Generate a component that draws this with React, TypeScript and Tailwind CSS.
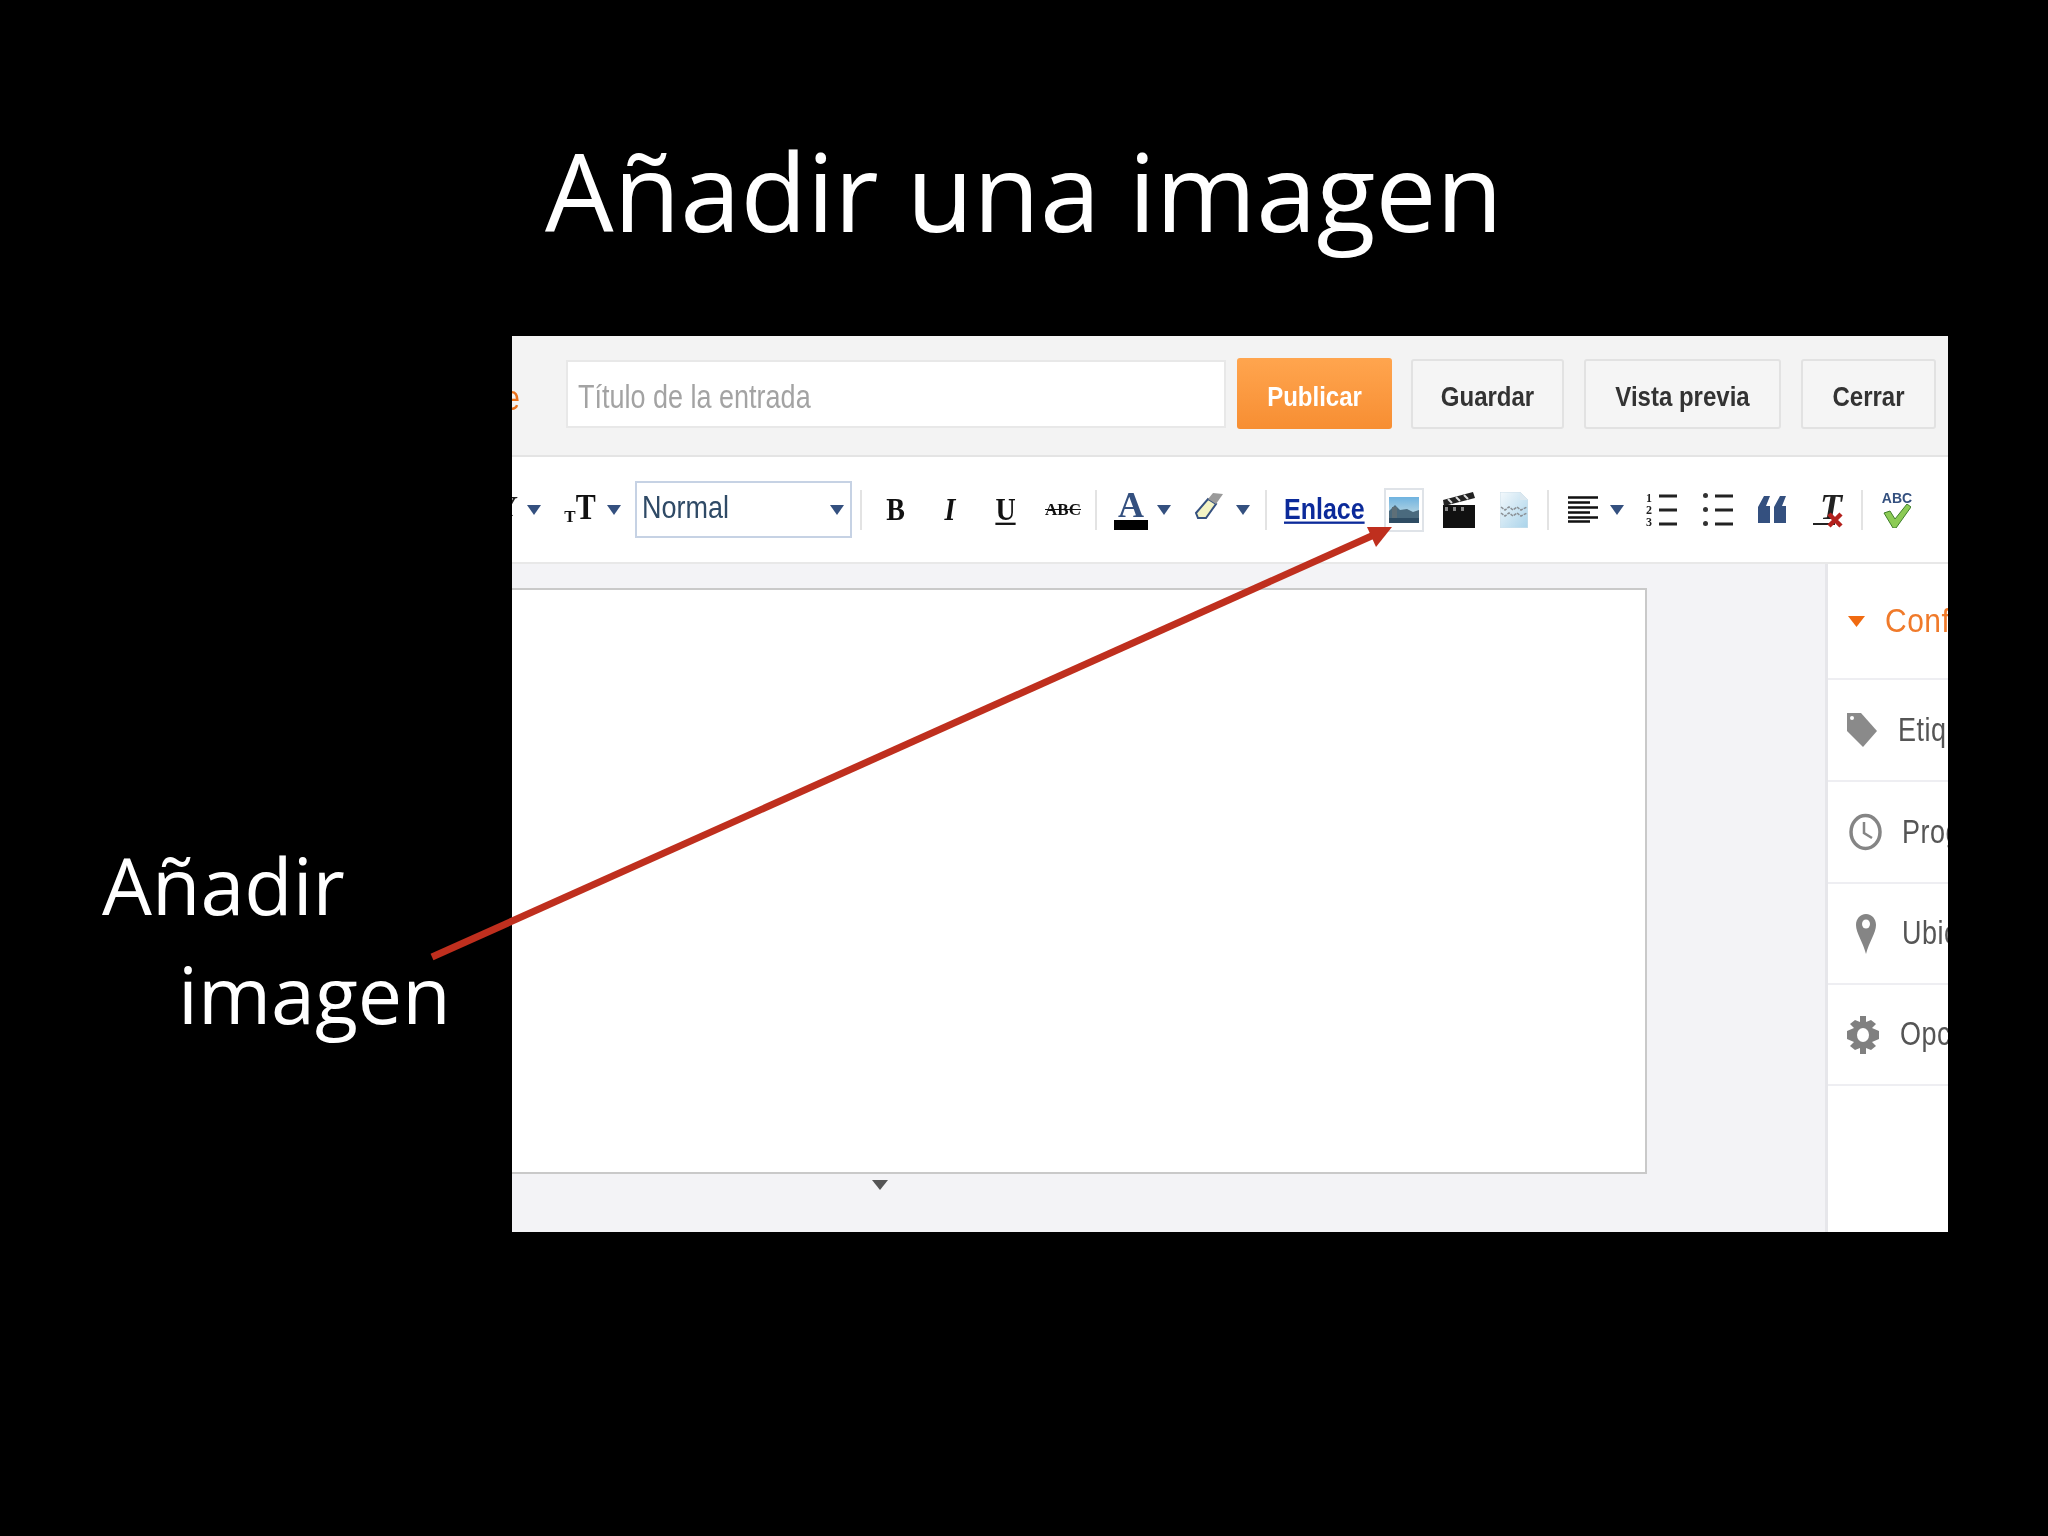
const sansFont = "font-['Liberation_Sans',Arial,sans-serif]";
const serifFont = "font-['Liberation_Serif','Times_New_Roman',serif]";

function Caret({ className = "" }: { className?: string }) {
  return (
    <svg width="16" height="12" viewBox="0 0 16 12" className={className}>
      <polygon points="1,1 15,1 8,11" fill="#34507f" />
    </svg>
  );
}

function Sep({ ml }: { ml: string }) {
  return <div className={`${ml} w-[2px] h-[40px] bg-[#e3e3e3]`} />;
}

function PictureIcon() {
  return (
    <svg width="30" height="26" viewBox="0 0 30 26">
      <defs>
        <linearGradient id="sky" x1="0" y1="0" x2="0" y2="1">
          <stop offset="0" stopColor="#6fb3e0" />
          <stop offset="0.55" stopColor="#a9cfe2" />
          <stop offset="1" stopColor="#3d5f78" />
        </linearGradient>
      </defs>
      <rect width="30" height="26" fill="url(#sky)" />
      <path d="M0 14 L6 8 L11 13 L18 12 L24 15 L30 13 V26 H0 Z" fill="#4a6a7e" />
      <rect x="3" y="10" width="5" height="12" fill="#5e6f78" />
      <rect x="0" y="21" width="30" height="5" fill="#2e4c63" />
    </svg>
  );
}

function ClapperIcon() {
  return (
    <svg width="32" height="36" viewBox="0 0 32 36">
      <rect x="0" y="13" width="32" height="23" fill="#111" />
      <path d="M0 8 L30 0 L32 6 L1 14 Z" fill="#222" />
      <path d="M5 7 L9 11 M13 5 L17 9 M21 3 L25 7" stroke="#ddd" strokeWidth="2" />
      <rect x="2" y="15" width="3" height="4" fill="#888" />
      <rect x="10" y="15" width="3" height="4" fill="#888" />
      <rect x="18" y="15" width="3" height="4" fill="#888" />
    </svg>
  );
}

function JumpIcon() {
  return (
    <svg width="28" height="36" viewBox="0 0 28 36">
      <defs>
        <linearGradient id="page" x1="0" y1="0" x2="1" y2="1">
          <stop offset="0" stopColor="#f4f9fc" />
          <stop offset="1" stopColor="#a9d3ea" />
        </linearGradient>
      </defs>
      <path d="M0 0 H20 L28 8 V36 H0 Z" fill="url(#page)" stroke="#cfe0ea" />
      <path d="M20 0 V8 H28" fill="#dbe8f0" />
      <path d="M1 15 L5 18 L9 15 L13 18 L17 15 L21 18 L27 15 M1 21 L5 24 L9 21 L13 24 L17 21 L21 24 L27 21" stroke="#8a8f94" strokeWidth="1.5" fill="none" strokeDasharray="3 1" />
    </svg>
  );
}

function EraserIcon() {
  return (
    <svg width="29" height="26" viewBox="0 0 29 26">
      <path d="M2 20 L14 6 L22 11 L12 25 H4 Z" fill="#f3f3c4" stroke="#34507f" strokeWidth="2" />
      <path d="M14 6 L19 0 L29 1 L22 11 Z" fill="#9a9a9a" />
    </svg>
  );
}

function AlignIcon() {
  return (
    <svg width="30" height="27" viewBox="0 0 30 27">
      <path d="M0 1.5 H30 M0 6.5 H22 M0 11.5 H30 M0 16.5 H22 M0 21.5 H30 M0 25.5 H22" stroke="#111" strokeWidth="2.6" />
    </svg>
  );
}

function ListLines() {
  return (
    <svg width="18" height="36" viewBox="0 0 18 36">
      <path d="M0 4 H18 M0 18 H18 M0 32 H18" stroke="#222" strokeWidth="3" />
    </svg>
  );
}

function QuoteIcon() {
  return (
    <svg width="28" height="27" viewBox="0 0 28 27">
      <path d="M6 0 H12 L8 10 H12 V27 H0 V11 Z M22 0 H28 L24 10 H28 V27 H16 V11 Z" fill="#34507f" />
    </svg>
  );
}

function SpellCheck() {
  return (
    <svg width="28" height="24" viewBox="0 0 28 24">
      <path d="M1 9 L7 7 L12 15 L24 0 L28 3 L13 24 H10 Z" fill="#8ccb55" stroke="#3f7f2a" strokeWidth="1" />
    </svg>
  );
}

function TagIcon() {
  return (
    <svg width="30" height="34" viewBox="0 0 30 34">
      <path d="M0 0 H14 L30 18 L16 34 L0 18 Z" fill="#8a8a8a" />
      <circle cx="5" cy="5" r="2" fill="#fff" />
    </svg>
  );
}

function ClockIcon() {
  return (
    <svg width="33" height="38" viewBox="0 0 33 38">
      <ellipse cx="16.5" cy="19" rx="14.5" ry="16.5" fill="none" stroke="#858585" strokeWidth="3.5" />
      <path d="M15 9 V20 L23 25" fill="none" stroke="#858585" strokeWidth="2.5" />
    </svg>
  );
}

function PinIcon() {
  return (
    <svg width="20" height="40" viewBox="0 0 20 40">
      <path d="M10 0 C4 0 0 5 0 11 C0 19 7 28 10 40 C13 28 20 19 20 11 C20 5 16 0 10 0 Z" fill="#858585" />
      <ellipse cx="10" cy="10" rx="4" ry="4.5" fill="#fff" />
    </svg>
  );
}

function GearIcon() {
  return (
    <svg width="32" height="38" viewBox="0 0 32 38">
      <path d="M13 0 H19 V6 L24 4 L29 8 L25 12 L32 15 V23 L25 26 L29 30 L24 34 L19 32 V38 H13 V32 L8 34 L3 30 L7 26 L0 23 V15 L7 12 L3 8 L8 4 L13 6 Z" fill="#808080" />
      <ellipse cx="16" cy="19" rx="6" ry="7" fill="#fff" />
    </svg>
  );
}

function SideRow({ pl, gap, height, icon, label, tone }: { pl: string; gap: string; height: string; icon: React.ReactNode; label: string; tone: string }) {
  return (
    <div className={`${height} ${pl} flex items-center overflow-hidden border-b-2 border-[#eeeef2] shrink-0`}>
      <div className="shrink-0 flex">{icon}</div>
      <span className={`${gap} ${tone} leading-none whitespace-nowrap tracking-[0.5px]`}>{label}</span>
    </div>
  );
}

function ActionButton({ label, className }: { label: string; className: string }) {
  return (
    <button className={`${className} h-[70px] flex items-center justify-center rounded-[3px] border-2 border-[#e2e2e2] bg-[#f5f5f5] text-[#333] text-[24px] font-bold`}>
      <span className="translate-y-[3px] scale-y-[1.15]">{label}</span>
    </button>
  );
}

export default function App() {
  return (
    <div className="relative w-[2048px] h-[1536px] overflow-hidden bg-black text-white font-['Open_Sans',sans-serif]">
      {/* Title */}
      <div className="h-[336px] pt-[136px] flex justify-center">
        <h1 className="text-[108.5px] leading-[108px] font-normal">Añadir una imagen</h1>
      </div>

      <div className="flex">
        {/* Caption */}
        <div className="w-[512px] pt-[494px] text-[79px] leading-[109px]">
          <div className="pl-[102px]">Añadir</div>
          <div className="pl-[178px]">imagen</div>
        </div>

        {/* Editor screenshot */}
        <div className={`w-[1436px] h-[896px] flex flex-col bg-white ${sansFont}`}>
          <div className="h-[121px] shrink-0 pb-[4px] flex items-center bg-[#f3f3f3] border-b-2 border-[#e4e4e4] blur-[0.4px]">
            <div className="w-[8px] overflow-hidden flex justify-end text-[#e8711c] text-[30px] leading-none translate-y-[4px] scale-y-[1.15]">e</div>
            <div className="ml-[46px] w-[660px] h-[68px] flex items-center pl-[10px] bg-white border-2 border-[#e8e8e8] text-[#a3a3a3] text-[27px]">
              <span className="translate-y-[4px] scale-y-[1.2]">Título de la entrada</span>
            </div>
            <button className="ml-[11px] w-[155px] h-[71px] flex items-center justify-center rounded-[3px] bg-gradient-to-b from-[#ffa54e] to-[#f78e32] text-white text-[24px] font-bold">
              <span className="translate-y-[3px] scale-y-[1.15]">Publicar</span>
            </button>
            <ActionButton label="Guardar" className="ml-[19px] w-[153px]" />
            <ActionButton label="Vista previa" className="ml-[20px] w-[197px]" />
            <ActionButton label="Cerrar" className="ml-[20px] w-[135px]" />
          </div>

          <div className="h-[107px] shrink-0 flex items-center bg-white border-b-2 border-[#e8e8e8] blur-[0.4px]">
            <div className={`w-[6px] overflow-hidden flex justify-end text-[#222] text-[30px] leading-none mb-[8px] ${serifFont} font-bold`}>Y</div>
            <Caret className="ml-[8px]" />
            <div className={`ml-[21px] w-[34px] flex items-end justify-center text-[#111] ${serifFont} font-bold leading-none`}>
              <span className="text-[17px]">T</span>
              <span className="text-[30px] origin-bottom scale-y-[1.2]">T</span>
            </div>
            <Caret className="ml-[9px]" />
            <div className="ml-[13px] w-[217px] h-[57px] flex items-center justify-between pl-[5px] pr-[5px] border-2 border-[#c6d2e4] text-[#2f4a66] text-[27px]">
              <span className="-translate-y-[2px] scale-y-[1.18]">Normal</span>
              <Caret />
            </div>
            <Sep ml="ml-[8px]" />
            <div className={`ml-[23px] w-[21px] flex justify-center text-[28px] leading-none font-bold text-[#111] scale-y-[1.15] ${serifFont}`}>B</div>
            <div className={`ml-[35px] w-[18px] flex justify-center text-[28px] leading-none font-bold italic text-[#111] scale-y-[1.15] ${serifFont}`}>I</div>
            <div className={`ml-[37px] w-[19px] flex justify-center text-[28px] leading-none font-bold underline text-[#111] scale-y-[1.15] ${serifFont}`}>U</div>
            <div className={`ml-[30px] w-[36px] flex justify-center text-[17px] leading-none font-bold line-through text-[#111] ${serifFont}`}>ABC</div>
            <Sep ml="ml-[14px]" />
            <div className="ml-[17px] w-[34px] flex flex-col items-center">
              <span className={`text-[36px] leading-[30px] font-bold text-[#34507f] ${serifFont}`}>A</span>
              <div className="w-full h-[10px] bg-black" />
            </div>
            <Caret className="ml-[8px]" />
            <div className="ml-[22px] flex mb-[8px]"><EraserIcon /></div>
            <Caret className="ml-[12px]" />
            <Sep ml="ml-[14px]" />
            <a className="ml-[17px] w-[81px] text-[25px] font-bold underline text-[#0b2a9a] scale-y-[1.15]">Enlace</a>
            <div className="ml-[19px] w-[40px] h-[44px] flex items-center justify-center border-2 border-[#dfe3e8] bg-white">
              <PictureIcon />
            </div>
            <div className="ml-[19px] flex"><ClapperIcon /></div>
            <div className="ml-[25px] flex"><JumpIcon /></div>
            <Sep ml="ml-[19px]" />
            <div className="ml-[19px] flex"><AlignIcon /></div>
            <Caret className="ml-[11px]" />
            <div className="ml-[21px] w-[31px] flex justify-between items-center">
              <div className={`flex flex-col text-[12px] leading-[12px] font-bold text-[#222] ${serifFont}`}>
                <span>1</span>
                <span>2</span>
                <span>3</span>
              </div>
              <ListLines />
            </div>
            <div className="ml-[26px] w-[30px] flex justify-between items-center">
              <div className="flex flex-col gap-[9px]">
                <div className="w-[5px] h-[5px] rounded-full bg-[#333]" />
                <div className="w-[5px] h-[5px] rounded-full bg-[#333]" />
                <div className="w-[5px] h-[5px] rounded-full bg-[#333]" />
              </div>
              <ListLines />
            </div>
            <div className="ml-[25px] flex"><QuoteIcon /></div>
            <div className="ml-[27px] relative w-[30px] h-[36px]">
              <span className={`absolute left-[7px] top-[-3px] text-[36px] leading-none font-bold italic text-[#222] ${serifFont}`}>T</span>
              <div className="absolute left-0 bottom-[3px] w-[22px] h-[2px] bg-[#222]" />
              <svg width="16" height="16" viewBox="0 0 16 16" className="absolute right-0 bottom-0">
                <path d="M2 2 L14 14 M14 2 L2 14" stroke="#b3201c" strokeWidth="4.5" />
              </svg>
            </div>
            <Sep ml="ml-[18px]" />
            <div className="ml-[19px] w-[30px] h-[36px] flex flex-col items-center">
              <span className="text-[14px] leading-[13px] font-bold text-[#34507f] scale-y-[1.1]">ABC</span>
              <div className="mt-[-1px] flex"><SpellCheck /></div>
            </div>
          </div>

          <div className="flex-1 flex min-h-0">
            <div className="flex-1 flex flex-col bg-[#f3f3f6] pt-[24px]">
              <div className="w-[1135px] h-[586px] bg-white border-2 border-l-0 border-[#c9c9c9]" />
              <svg width="16" height="10" viewBox="0 0 16 10" className="ml-[360px] mt-[6px]">
                <polygon points="0,0 16,0 8,10" fill="#555" />
              </svg>
            </div>
            <div className="w-[123px] shrink-0 flex flex-col bg-white border-l-[3px] border-[#e6e6ea] text-[27px]">
              <SideRow
                height="h-[116px]"
                pl="pl-[20px]"
                gap="ml-[20px] text-[30px] scale-y-[1.1] origin-left"
                tone="text-[#f07a2a]"
                label="Configuración"
                icon={
                  <svg width="17" height="11" viewBox="0 0 17 11">
                    <polygon points="0,0 17,0 8.5,11" fill="#f06a10" />
                  </svg>
                }
              />
              <SideRow height="h-[102px]" pl="pl-[19px]" gap="ml-[21px] scale-y-[1.2] origin-left" tone="text-[#555]" label="Etiquetas" icon={<TagIcon />} />
              <SideRow height="h-[102px]" pl="pl-[21px]" gap="ml-[20px] scale-y-[1.2] origin-left" tone="text-[#555]" label="Programar" icon={<ClockIcon />} />
              <SideRow height="h-[101px]" pl="pl-[28px]" gap="ml-[26px] scale-y-[1.2] origin-left" tone="text-[#555]" label="Ubicación" icon={<PinIcon />} />
              <SideRow height="h-[101px]" pl="pl-[19px]" gap="ml-[21px] scale-y-[1.2] origin-left" tone="text-[#555]" label="Opciones" icon={<GearIcon />} />
            </div>
          </div>
        </div>
      </div>

      {/* Arrow over the slide */}
      <svg className="absolute left-0 top-0 pointer-events-none" width="2048" height="1536" viewBox="0 0 2048 1536">
        <line x1="432" y1="957" x2="1376" y2="534" stroke="#bf2f1e" strokeWidth="7" />
        <polygon points="1392,527 1376,547 1367,527" fill="#bf2f1e" />
      </svg>
    </div>
  );
}
